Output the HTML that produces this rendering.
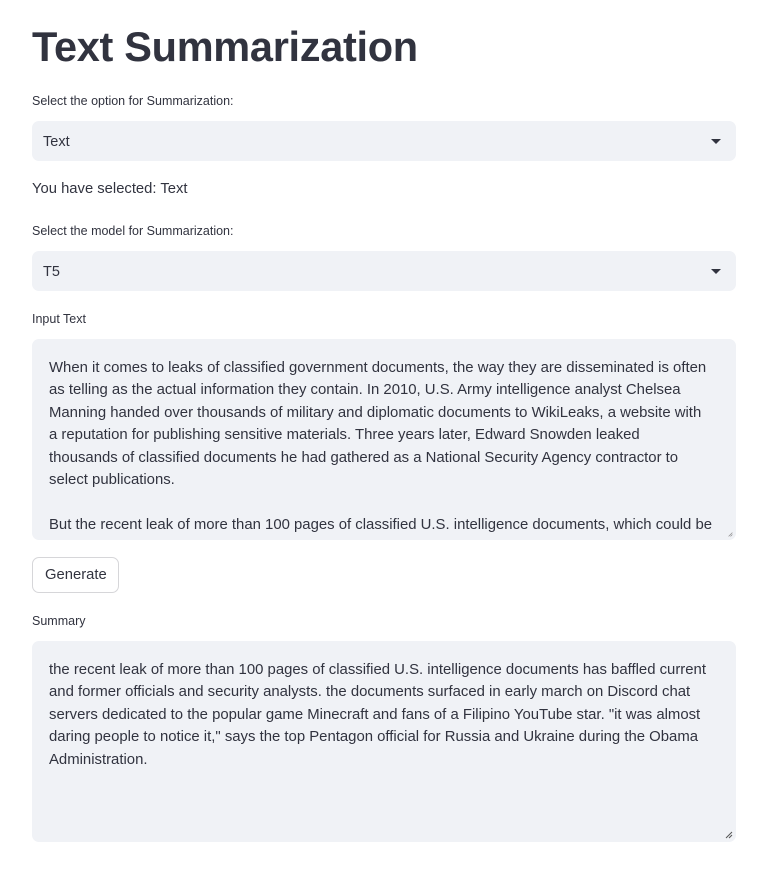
<!DOCTYPE html>
<html><head><meta charset="utf-8"><style>
body{margin:0;background:#fff;font-family:"Liberation Sans",sans-serif;color:#31333f;width:768px;height:871px;overflow:hidden;position:relative}
.a{position:absolute;white-space:nowrap}
h1{position:absolute;left:32px;top:23px;margin:0;font-size:41.5px;font-weight:bold;letter-spacing:-0.3px;line-height:48px}
.lab{font-size:12.5px}
.sel{position:absolute;left:32px;width:704px;height:40px;background:#f0f2f6;border-radius:7px}
.sel span{position:absolute;left:11px;top:13px;font-size:14.5px}
.sel i{position:absolute;right:15px;top:18px;width:0;height:0;border-left:5px solid transparent;border-right:5px solid transparent;border-top:5px solid #31333f}
.ta{position:absolute;left:32px;width:704px;height:201px;background:#f0f2f6;border-radius:7px;overflow:hidden}
.ta div{position:absolute;left:17px;top:18px;font-size:14.9px;line-height:22.4px;white-space:nowrap}
.grip{position:absolute;right:3px;bottom:3px;width:8px;height:8px}
</style></head><body>
<h1>Text Summarization</h1>
<div class="a lab" style="left:32px;top:94px">Select the option for Summarization:</div>
<div class="sel" style="top:121px"><span>Text</span><i></i></div>
<div class="a" style="left:32px;top:181px;font-size:14.8px">You have selected: Text</div>
<div class="a lab" style="left:32px;top:224px">Select the model for Summarization:</div>
<div class="sel" style="top:251px"><span>T5</span><i></i></div>
<div class="a lab" style="left:32px;top:312px">Input Text</div>
<div class="ta" style="top:339px"><div>When it comes to leaks of classified government documents, the way they are disseminated is often<br>as telling as the actual information they contain. In 2010, U.S. Army intelligence analyst Chelsea<br>Manning handed over thousands of military and diplomatic documents to WikiLeaks, a website with<br>a reputation for publishing sensitive materials. Three years later, Edward Snowden leaked<br>thousands of classified documents he had gathered as a National Security Agency contractor to<br>select publications.<br><br>But the recent leak of more than 100 pages of classified U.S. intelligence documents, which could be</div>
<svg class="grip" viewBox="0 0 8 8" style="width:5px;height:5px"><path d="M1 7L7 1M4 7L7 4" stroke="#888" stroke-width="1"/></svg></div>
<div class="a" style="left:32px;top:557px;width:85px;height:34px;border:1px solid #d6d6d9;border-radius:7px;background:#fff"><span style="position:absolute;left:12px;top:9px;font-size:14.8px">Generate</span></div>
<div class="a lab" style="left:32px;top:614px">Summary</div>
<div class="ta" style="top:641px"><div>the recent leak of more than 100 pages of classified U.S. intelligence documents has baffled current<br>and former officials and security analysts. the documents surfaced in early march on Discord chat<br>servers dedicated to the popular game Minecraft and fans of a Filipino YouTube star. "it was almost<br>daring people to notice it," says the top Pentagon official for Russia and Ukraine during the Obama<br>Administration.</div>
<svg class="grip" viewBox="0 0 8 8"><path d="M1 7L7 1M4 7L7 4" stroke="#555" stroke-width="1"/></svg></div>
</body></html>
